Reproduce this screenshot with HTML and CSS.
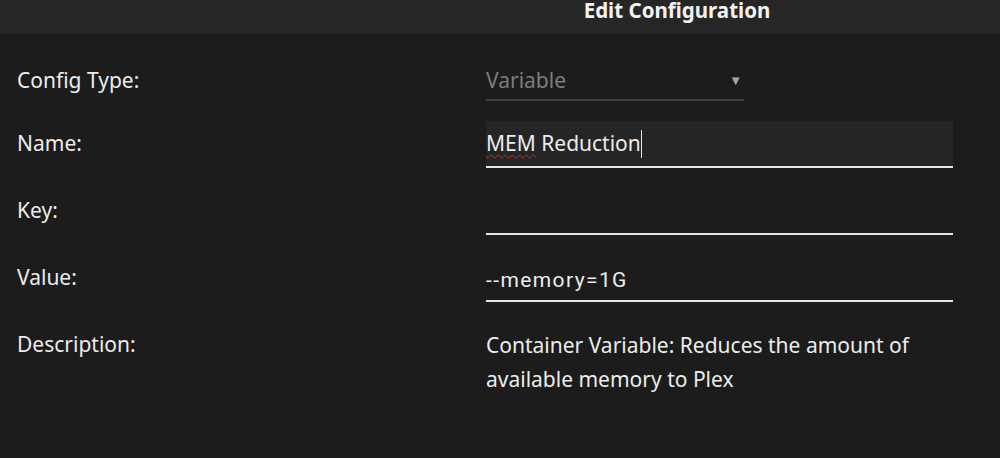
FILE: index.html
```html
<!DOCTYPE html>
<html lang="en">

<head>
    <meta charset="UTF-8">
    <title>Edit Configuration</title>
    <link rel="stylesheet" href="styles.css">
</head>

<body>
    <div class="dialog-title">Edit Configuration</div>

    <div class="config-form">
        <div class="form-row">
            <div class="form-label">Config Type:</div>
            <div class="form-field select-field">
                <span class="select-value">Variable</span>
                <span class="select-arrow">&#9660;</span>
            </div>
        </div>
        <div class="form-row">
            <div class="form-label">Name:</div>
            <div class="form-field text-field focused">
                <span class="misspelled">MEM</span> Reduction<span class="caret"></span>
            </div>
        </div>
        <div class="form-row">
            <div class="form-label">Key:</div>
            <div class="form-field text-field"></div>
        </div>
        <div class="form-row">
            <div class="form-label">Value:</div>
            <div class="form-field text-field mono-ish">--memory=1G</div>
        </div>
        <div class="form-row">
            <div class="form-label">Description:</div>
            <div class="description">Container Variable: Reduces the amount of available memory to Plex</div>
        </div>
    </div>
</body>

</html>
```

FILE: styles.css
```css
body,
html {
    margin: 0;
    padding: 0;
    height: 100%;
    background: #1c1c1c;
    color: #ececec;
    font-family: "Noto Sans", "Open Sans", sans-serif;
    font-size: 21px;
}

.dialog-title {
    height: 34px;
    line-height: 20px;
    background: #262626;
    text-align: center;
    padding-left: 354px;
    font-weight: bold;
    font-size: 20.5px;
    color: #f2f2f2;
    box-sizing: border-box;
}

.config-form {
    padding: 20px 0 0 17px;
    display: flex;
    flex-direction: column;
    gap: 20px;
}

.form-row {
    display: grid;
    grid-template-columns: 469px 467px;
    min-height: 47px;
}

.form-label {
    padding-top: 8px;
    line-height: 28px;
}

.form-row:first-child .form-label {
    padding-top: 12px;
}

.form-field {
    height: 47px;
    box-sizing: border-box;
    border-bottom: 2px solid #e6e6e6;
    padding-top: 9px;
    line-height: 28px;
}

.select-field {
    width: 258px;
    display: flex;
    justify-content: space-between;
    border-bottom: 2px solid #404040;
    color: #7d7d7d;
    padding-top: 12px;
}

.select-arrow {
    font-size: 13px;
    color: #a8a8a8;
    padding-right: 2px;
}

.text-field.focused {
    background: #252525;
    padding-top: 8px;
}

.misspelled {
    text-decoration: underline wavy #e01b1b;
    text-decoration-thickness: 1px;
    text-underline-offset: 3px;
}

.caret {
    display: inline-block;
    width: 1px;
    height: 28px;
    background: #e6e6e6;
    vertical-align: -7px;
}

.mono-ish {
    font-family: Roboto, sans-serif;
    font-size: 21px;
    letter-spacing: 1.4px;
    padding-top: 11px;
}

.description {
    padding-top: 6px;
    line-height: 34px;
    padding-right: 20px;
}
```
